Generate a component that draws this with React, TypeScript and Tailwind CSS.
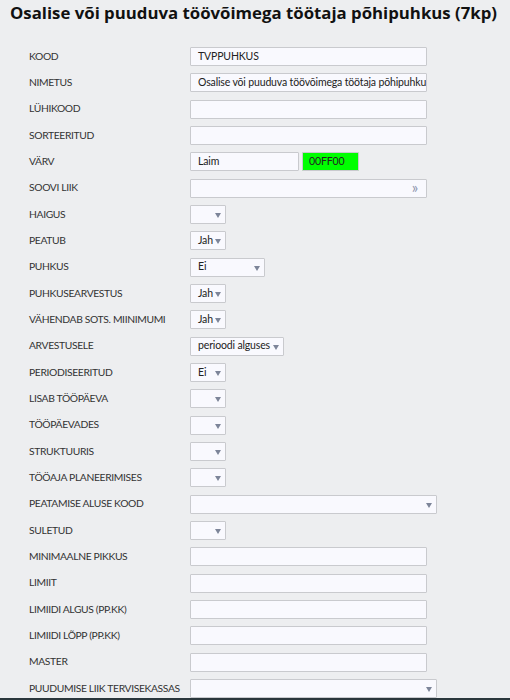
import React from "react";

type Row =
  | { label: string; kind: "text"; value?: string }
  | { label: string; kind: "color"; name: string; hex: string }
  | { label: string; kind: "lookup" }
  | { label: string; kind: "select"; value?: string; width: string };

const rows: Row[] = [
  { label: "KOOD", kind: "text", value: "TVPPUHKUS" },
  { label: "NIMETUS", kind: "text", value: "Osalise või puuduva töövõimega töötaja põhipuhkus (7kp)" },
  { label: "LÜHIKOOD", kind: "text" },
  { label: "SORTEERITUD", kind: "text" },
  { label: "VÄRV", kind: "color", name: "Laim", hex: "00FF00" },
  { label: "SOOVI LIIK", kind: "lookup" },
  { label: "HAIGUS", kind: "select", width: "w-[36px]" },
  { label: "PEATUB", kind: "select", value: "Jah", width: "w-[36px]" },
  { label: "PUHKUS", kind: "select", value: "Ei", width: "w-[75px]" },
  { label: "PUHKUSEARVESTUS", kind: "select", value: "Jah", width: "w-[36px]" },
  { label: "VÄHENDAB SOTS. MIINIMUMI", kind: "select", value: "Jah", width: "w-[36px]" },
  { label: "ARVESTUSELE", kind: "select", value: "perioodi alguses", width: "w-[94px]" },
  { label: "PERIODISEERITUD", kind: "select", value: "Ei", width: "w-[36px]" },
  { label: "LISAB TÖÖPÄEVA", kind: "select", width: "w-[36px]" },
  { label: "TÖÖPÄEVADES", kind: "select", width: "w-[36px]" },
  { label: "STRUKTUURIS", kind: "select", width: "w-[36px]" },
  { label: "TÖÖAJA PLANEERIMISES", kind: "select", width: "w-[36px]" },
  { label: "PEATAMISE ALUSE KOOD", kind: "select", width: "w-[247px]" },
  { label: "SULETUD", kind: "select", width: "w-[36px]" },
  { label: "MINIMAALNE PIKKUS", kind: "text" },
  { label: "LIMIIT", kind: "text" },
  { label: "LIMIIDI ALGUS (PP.KK)", kind: "text" },
  { label: "LIMIIDI LÕPP (PP.KK)", kind: "text" },
  { label: "MASTER", kind: "text" },
  { label: "PUUDUMISE LIIK TERVISEKASSAS", kind: "select", width: "w-[247px]" },
];

const box = "shrink-0 h-[19px] border border-[#c9cace] bg-[#f9f9fe] rounded-[1px] flex items-center text-[10.5px] tracking-[-0.15px] text-[#222] overflow-hidden whitespace-nowrap";

function Arrow() {
  return (
    <svg width="6" height="5" viewBox="0 0 6 5" className="absolute right-[4px] top-[7px]">
      <path d="M0 0 H6 L3 5 Z" fill="#7d8599" />
    </svg>
  );
}

function Field({ row }: { row: Row }) {
  if (row.kind === "text") {
    return <div className={`${box} w-[237px] pl-[7px]`}>{row.value}</div>;
  }
  if (row.kind === "color") {
    return (
      <div className="flex gap-[3px]">
        <div className={`${box} w-[109px] pl-[7px]`}>{row.name}</div>
        <div className={`${box} w-[57px] pl-[6px] !bg-[#00ff00]`}>{row.hex}</div>
      </div>
    );
  }
  if (row.kind === "lookup") {
    return (
      <div className={`${box} w-[237px] justify-end pr-[8px]`}>
        <span className="text-[#8a93ab] text-[15px] leading-[15px] -mt-[2px]">»</span>
      </div>
    );
  }
  return (
    <div className={`${box} ${row.width} relative pl-[7px]`}>
      {row.value}
      <Arrow />
    </div>
  );
}

export default function App() {
  return (
    <div className="relative h-[700px] w-[510px] overflow-hidden bg-[#edeef0] font-['Lato',sans-serif]">
      <h1 className="pl-[10px] pt-[2px] text-[16.8px] leading-[22px] font-bold text-[#111] font-['Open_Sans',sans-serif] whitespace-nowrap">
        Osalise või puuduva töövõimega töötaja põhipuhkus (7kp)
      </h1>
      <div className="mt-[23px] flex flex-col gap-y-[7.33px]">
        {rows.map((row) => (
          <div key={row.label} className="flex items-center h-[19px]">
            <div className="w-[190px] shrink-0 pl-[29px] text-[10.3px] tracking-[-0.35px] text-[#333] whitespace-nowrap">{row.label}</div>
            <Field row={row} />
          </div>
        ))}
      </div>
      <div className="absolute bottom-0 left-0 right-0 h-[2px] bg-[#2a363c]" />
    </div>
  );
}
